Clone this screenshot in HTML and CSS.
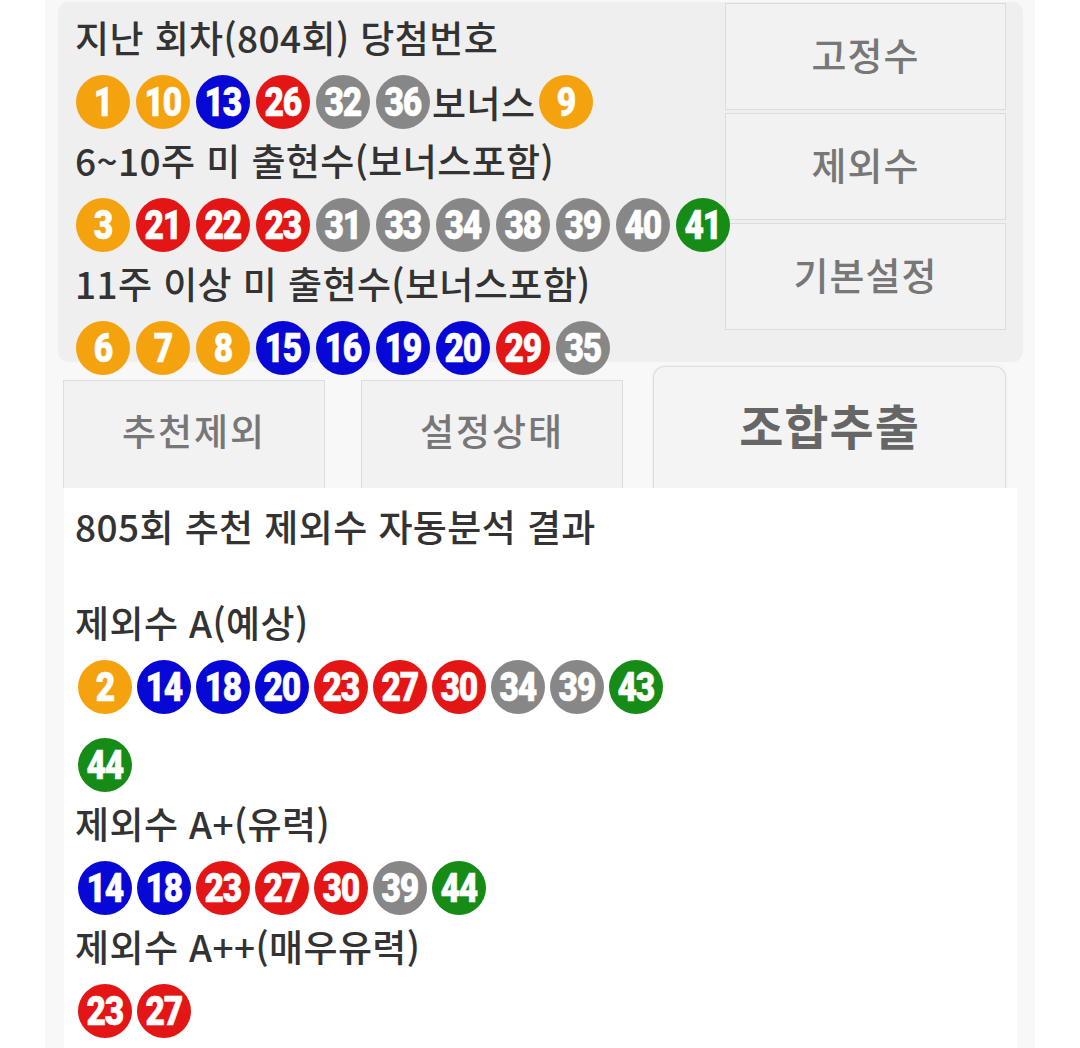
FILE: index.html
```html
<!DOCTYPE html>
<html lang="ko">
<head>
<meta charset="utf-8">
<title>로또 제외수</title>
<link rel="stylesheet" href="styles.css">
</head>
<body>
<div class="page">
  <div class="panel">
    <div class="panel-left">
      <div class="label">지난 회차(804회) 당첨번호</div>
      <div class="balls">
        <span class="ball y"><b>1</b></span><span class="ball y"><b>10</b></span><span class="ball b"><b>13</b></span><span class="ball r"><b>26</b></span><span class="ball g"><b>32</b></span><span class="ball g"><b>36</b></span><span class="bonus">보너스</span><span class="ball y"><b>9</b></span>
      </div>
      <div class="label">6~10주 미 출현수(보너스포함)</div>
      <div class="balls">
        <span class="ball y"><b>3</b></span><span class="ball r"><b>21</b></span><span class="ball r"><b>22</b></span><span class="ball r"><b>23</b></span><span class="ball g"><b>31</b></span><span class="ball g"><b>33</b></span><span class="ball g"><b>34</b></span><span class="ball g"><b>38</b></span><span class="ball g"><b>39</b></span><span class="ball g"><b>40</b></span><span class="ball gr"><b>41</b></span>
      </div>
      <div class="label">11주 이상 미 출현수(보너스포함)</div>
      <div class="balls">
        <span class="ball y"><b>6</b></span><span class="ball y"><b>7</b></span><span class="ball y"><b>8</b></span><span class="ball b"><b>15</b></span><span class="ball b"><b>16</b></span><span class="ball b"><b>19</b></span><span class="ball b"><b>20</b></span><span class="ball r"><b>29</b></span><span class="ball g"><b>35</b></span>
      </div>
    </div>
    <div class="panel-right">
      <div class="side-btn">고정수</div>
      <div class="side-btn">제외수</div>
      <div class="side-btn">기본설정</div>
    </div>
  </div>

  <div class="tabs">
    <div class="tab">추천제외</div>
    <div class="tab tab-2">설정상태</div>
    <div class="tab tab-main">조합추출</div>
  </div>

  <div class="result">
    <div class="label head">805회 추천 제외수 자동분석 결과</div>
    <div class="label">제외수 A(예상)</div>
    <div class="balls res">
      <span class="ball y"><b>2</b></span><span class="ball b"><b>14</b></span><span class="ball b"><b>18</b></span><span class="ball b"><b>20</b></span><span class="ball r"><b>23</b></span><span class="ball r"><b>27</b></span><span class="ball r"><b>30</b></span><span class="ball g"><b>34</b></span><span class="ball g"><b>39</b></span><span class="ball gr"><b>43</b></span><span class="ball gr"><b>44</b></span>
    </div>
    <div class="label">제외수 A+(유력)</div>
    <div class="balls res">
      <span class="ball b"><b>14</b></span><span class="ball b"><b>18</b></span><span class="ball r"><b>23</b></span><span class="ball r"><b>27</b></span><span class="ball r"><b>30</b></span><span class="ball g"><b>39</b></span><span class="ball gr"><b>44</b></span>
    </div>
    <div class="label">제외수 A++(매우유력)</div>
    <div class="balls res">
      <span class="ball r"><b>23</b></span><span class="ball r"><b>27</b></span>
    </div>
  </div>
</div>
</body>
</html>
```
FILE: styles.css
```css
* { box-sizing: border-box; }

body {
  margin: 0;
  background: #ffffff;
  font-family: "Noto Sans CJK KR", "Noto Sans", sans-serif;
  color: #333333;
}

.page {
  margin-left: 45px;
  width: 990px;
  min-height: 1048px;
  background: #f8f8f8;
  padding-top: 2px;
}

.panel {
  margin: 0 12px 0 13px;
  height: 360px;
  background: #efefef;
  border-radius: 10px;
  display: flex;
}

.panel-left {
  flex: 1;
  min-width: 0;
  padding: 6px 0 0 17px;
  position: relative;
  z-index: 1;
}

.label {
  height: 58px;
  line-height: 58px;
  font-size: 37px;
  font-weight: 500;
  color: #333333;
  white-space: nowrap;
  letter-spacing: 0.4px;
}

.balls {
  display: flex;
  flex-wrap: nowrap;
  align-items: center;
  padding: 9px 0 2px 1px;
  gap: 6px;
}

.ball {
  flex: none;
  width: 54px;
  height: 54px;
  border-radius: 50%;
  display: flex;
  align-items: center;
  justify-content: center;
  color: #ffffff;
  font-family: Roboto, "Liberation Sans", sans-serif;
  font-weight: 900;
  font-size: 40px;
  line-height: 1;
}

.ball b {
  display: inline-block;
  font-weight: 900;
  letter-spacing: -1.5px;
  transform: scaleX(0.84);
  margin-top: 1px;
  -webkit-text-stroke: 0.6px #ffffff;
}

.ball.y { background: #f5a20f; }
.ball.b { background: #0808d6; }
.ball.r { background: #e31515; }
.ball.g { background: #878787; }
.ball.gr { background: #168c16; }

.bonus {
  font-size: 37px;
  font-weight: 500;
  color: #333333;
  margin: 0 -3px 0 -4px;
  letter-spacing: 0.5px;
  line-height: 54px;
}

.panel-right {
  width: 281px;
  margin-right: 17px;
  padding-top: 1px;
  display: flex;
  flex-direction: column;
  gap: 3px;
}

.side-btn {
  height: 107px;
  background: #f2f2f2;
  border: 1px solid #dcdcdc;
  display: flex;
  align-items: center;
  justify-content: center;
  padding-bottom: 6px;
  font-size: 38px;
  font-weight: 500;
  letter-spacing: 1px;
  color: #777777;
}

.tabs {
  margin-top: 4px;
  height: 122px;
  display: flex;
  align-items: flex-end;
  padding-left: 18px;
}

.tab {
  width: 262px;
  height: 108px;
  background: #f2f2f2;
  border: 1px solid #dddddd;
  border-bottom: none;
  display: flex;
  align-items: center;
  justify-content: center;
  padding-bottom: 10px;
  font-size: 37px;
  font-weight: 500;
  letter-spacing: 2px;
  color: #777777;
}

.tab-2 { margin-left: 36px; }

.tab-main {
  margin-left: 30px;
  width: 353px;
  height: 122px;
  border-radius: 12px 12px 0 0;
  background: #f4f4f4;
  box-shadow: 0 0 3px rgba(0, 0, 0, 0.08);
  font-size: 48px;
  font-weight: 700;
  letter-spacing: 1px;
  color: #666666;
  padding-bottom: 8px;
}

.result {
  position: relative;
  margin-left: 19px;
  width: 953px;
  min-height: 560px;
  background: #ffffff;
  padding: 9px 0 0 11px;
}

.result .head { margin-bottom: 38px; }

.balls.res {
  flex-wrap: wrap;
  max-width: 620px;
  padding: 9px 0 2px 3px;
  gap: 24px 5px;
}
```
